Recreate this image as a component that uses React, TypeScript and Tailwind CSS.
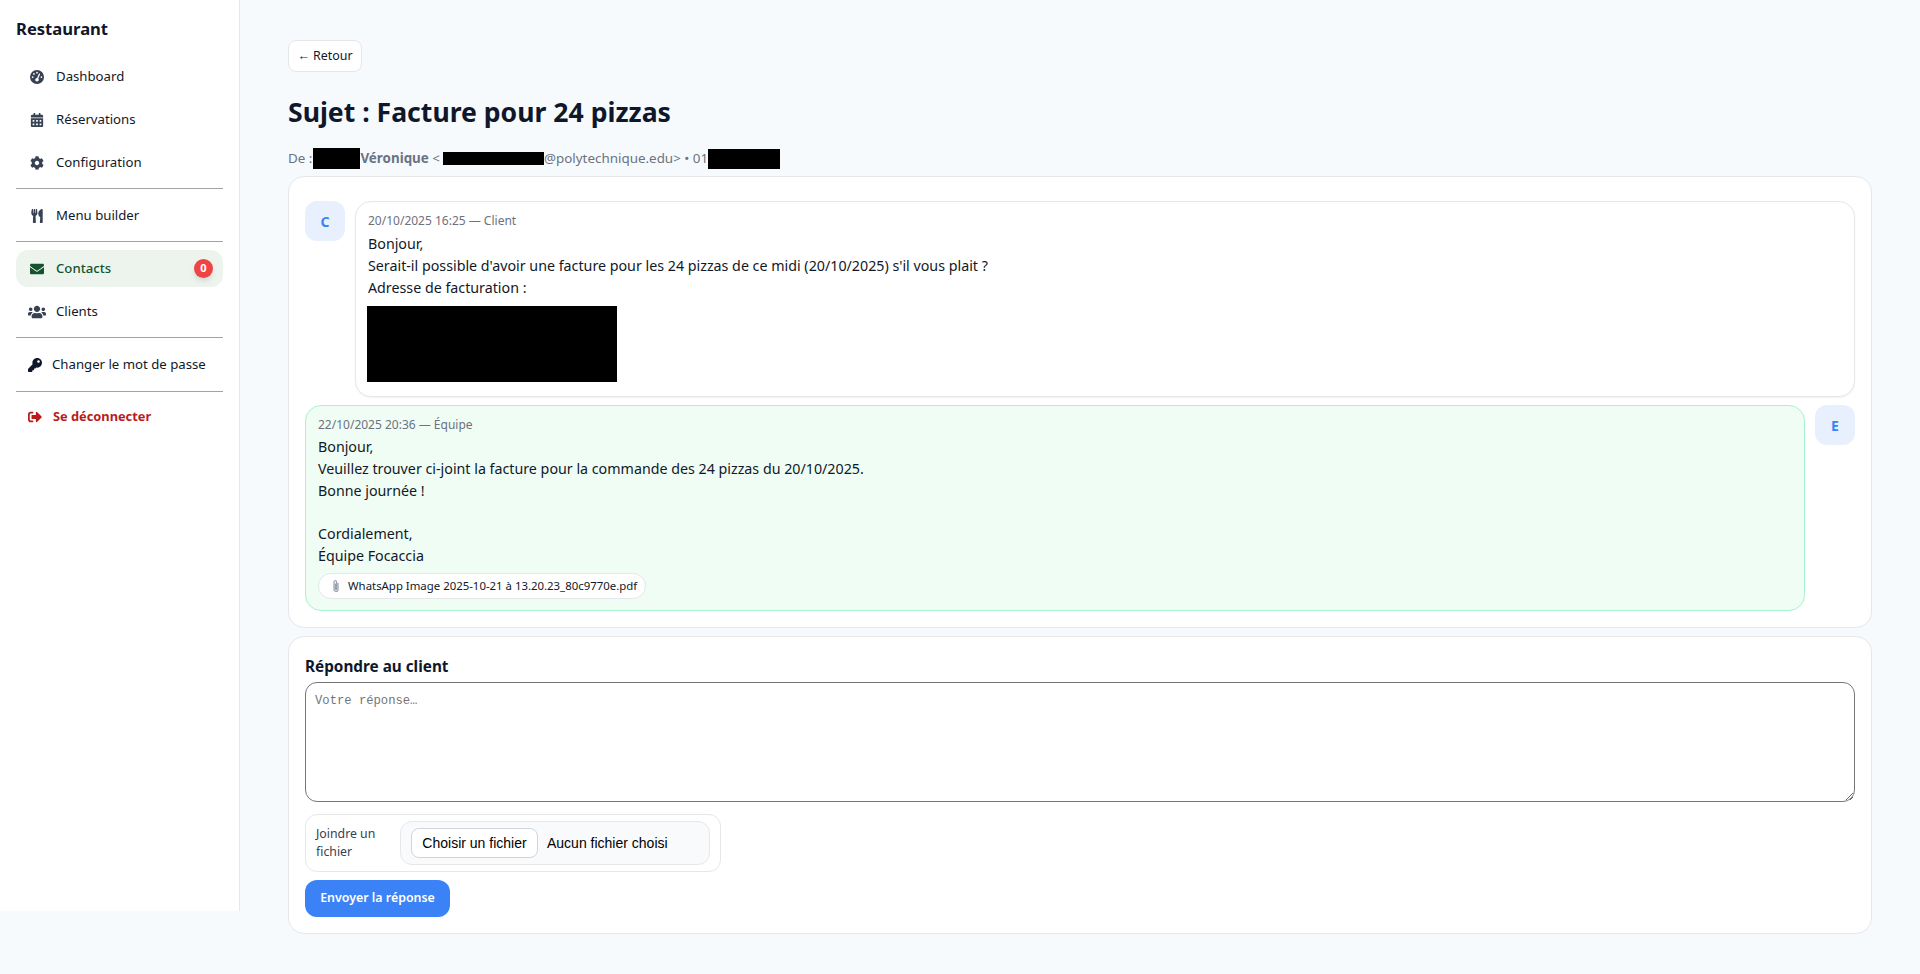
import React from "react";
import { FaCalendarAlt, FaCog, FaUtensils, FaEnvelope, FaUsers, FaKey, FaSignOutAlt } from "react-icons/fa";
import { FaGaugeHigh } from "react-icons/fa6";

const NavItem = ({ icon, label }: { icon: React.ReactNode; label: string }) => (
    <a className="flex h-[37px] items-center rounded-xl pl-[14px] text-[13.2px] text-[#111827]">
        <span className="flex w-[26px] shrink-0 text-[14px] text-[#374151]">{icon}</span>
        {label}
    </a>
);

const Divider = () => <div className="mt-px mb-[2px] h-px bg-[#a3a3a3]" />;

const Redacted = ({ className }: { className: string }) => <span className={`inline-block bg-black align-middle ${className}`} />;

const Avatar = ({ letter }: { letter: string }) => (
    <div className="flex size-10 shrink-0 items-center justify-center rounded-xl bg-[#e8f0fe] text-[14px] font-bold text-[#3b82f6]">
        {letter}
    </div>
);

export default function App() {
    return (
        <div className="flex h-[974px] items-start overflow-hidden bg-[#f6fafd] font-['Noto_Sans',sans-serif] text-[#111827]">
            {/* Sidebar */}
            <aside className="h-[911px] w-[240px] shrink-0 border-r border-[#e5e7eb] bg-white px-4 pt-[16px]">
                <h1 className="mb-[16px] text-[16.6px] leading-[26px] font-bold text-[#0f172a]">Restaurant</h1>
                <nav className="flex flex-col gap-[6px]">
                    <NavItem icon={<FaGaugeHigh />} label="Dashboard" />
                    <NavItem icon={<FaCalendarAlt />} label="Réservations" />
                    <NavItem icon={<FaCog />} label="Configuration" />
                    <Divider />
                    <NavItem icon={<FaUtensils />} label="Menu builder" />
                    <Divider />
                    <a className="flex h-[37px] items-center rounded-xl bg-[#edf4ee] pr-[10px] pl-[14px] text-[13.2px] font-medium text-[#14532d]">
                        <span className="flex w-[26px] shrink-0 text-[14px]">
                            <FaEnvelope />
                        </span>
                        Contacts
                        <span className="ml-auto flex size-[19px] items-center justify-center rounded-full bg-[#ef4444] text-[11px] font-bold text-white shadow-md">
                            0
                        </span>
                    </a>
                    <a className="flex h-[37px] items-center pl-[12px] text-[13.2px] text-[#111827]">
                        <span className="flex w-[28px] shrink-0 text-[18px] text-[#374151]">
                            <FaUsers />
                        </span>
                        Clients
                    </a>
                    <Divider />
                    <a className="flex h-[37px] items-center pl-[12px] text-[13.2px] text-[#111827]">
                        <span className="flex w-[24px] shrink-0 text-[14px] text-[#0f172a]">
                            <FaKey />
                        </span>
                        Changer le mot de passe
                    </a>
                    <div className="mt-[2px] h-px bg-[#a3a3a3]" />
                    <a className="flex h-[37px] items-center pl-[12px] text-[12.8px] font-bold text-[#b91c1c]">
                        <span className="flex w-[25px] shrink-0 text-[14px]">
                            <FaSignOutAlt />
                        </span>
                        Se déconnecter
                    </a>
                </nav>
            </aside>

            {/* Main */}
            <main className="min-w-0 flex-1 px-12 pt-10">
                <button className="h-8 w-[74px] rounded-lg border border-[#e5e7eb] bg-white text-[12.4px]">← Retour</button>

                <h2 className="mt-[22px] text-[26.6px] leading-[36px] font-bold text-[#0f172a]">Sujet : Facture pour 24 pizzas</h2>

                <div className="mt-[18px] flex h-[21px] items-center text-[13.4px] text-[#6b7280]">
                    De :
                    <Redacted className="ml-[1px] h-[21px] w-[47px]" />
                    <strong className="font-bold">Véronique</strong>
                    &nbsp;&lt;
                    <Redacted className="ml-[3px] h-[13px] w-[101px]" />
                    @polytechnique.edu&gt;&nbsp;•&nbsp;01
                    <Redacted className="h-[20px] w-[72px]" />
                </div>

                {/* Thread */}
                <section className="mt-[7px] flex flex-col gap-2 rounded-2xl border border-[#e5e7eb] bg-white px-4 pt-6 pb-4">
                    <div className="flex gap-[10px]">
                        <Avatar letter="C" />
                        <div className="h-[196px] flex-1 rounded-2xl border border-[#e5e7eb] bg-white px-3 pt-[9px] text-[14.25px] leading-[21.75px] shadow-[0_1px_2px_rgba(0,0,0,0.06)]">
                            <div className="mb-[2px] text-[12px] leading-[20px] text-[#6b7280]">20/10/2025 16:25 — Client</div>
                            <p>Bonjour,</p>
                            <p>Serait-il possible d'avoir une facture pour les 24 pizzas de ce midi (20/10/2025) s'il vous plait ?</p>
                            <p>Adresse de facturation :</p>
                            <div className="mt-[8px] -ml-px h-[76px] w-[250px] bg-black" />
                        </div>
                    </div>

                    <div className="flex gap-[10px]">
                        <div className="h-[206px] flex-1 rounded-2xl border border-[#a7f3d0] bg-[#f0fdf5] px-3 pt-[9px] text-[14.25px] leading-[21.75px]">
                            <div className="mb-px text-[12px] leading-[20px] text-[#6b7280]">22/10/2025 20:36 — Équipe</div>
                            <p>Bonjour,</p>
                            <p>Veuillez trouver ci-joint la facture pour la commande des 24 pizzas du 20/10/2025.</p>
                            <p>Bonne journée !</p>
                            <p>&nbsp;</p>
                            <p>Cordialement,</p>
                            <p>Équipe Focaccia</p>
                            <a className="mt-[6px] inline-flex h-[26px] items-center gap-[7px] rounded-full border border-[#e5e7eb] bg-white pr-2 pl-3 text-[11.4px] leading-none text-[#111827]">
                                <svg width="10" height="14" viewBox="0 0 10 14" fill="none" stroke="#9ca3af" strokeWidth="1.2">
                                    <path d="M7 4v6.5a2 2 0 0 1-4 0V3a1.3 1.3 0 0 1 2.6 0v7a.6.6 0 0 1-1.2 0V4.5" />
                                </svg>
                                WhatsApp Image 2025-10-21 à 13.20.23_80c9770e.pdf
                            </a>
                        </div>
                        <Avatar letter="E" />
                    </div>
                </section>

                {/* Reply */}
                <section className="mt-2 h-[298px] rounded-2xl border border-[#e5e7eb] bg-white px-4 pt-[17px]">
                    <h3 className="text-[15.3px] leading-[24px] font-bold text-[#0f172a]">Répondre au client</h3>
                    <textarea
                        placeholder="Votre réponse…"
                        className="mt-[4px] block h-[120px] w-full rounded-xl border border-[#767676] bg-white px-[9px] py-[9px] font-['Liberation_Mono',monospace] text-[12.2px] placeholder:text-[#757575]"
                    />
                    <div className="mt-3 flex h-[58px] w-[416px] items-center rounded-xl border border-[#e5e7eb] px-[10px]">
                        <span className="w-[84px] text-[12.3px] leading-[18px] text-[#374151]">Joindre un fichier</span>
                        <div className="flex h-[44px] w-[310px] items-center rounded-xl border border-[#e5e7eb] bg-[#f9fafb] pl-[10px] font-['Liberation_Sans',sans-serif] text-[14px] text-black">
                            <span className="flex h-[30px] w-[127px] items-center justify-center rounded-lg border border-[#d1d5db] bg-white">
                                Choisir un fichier
                            </span>
                            <span className="ml-[9px]">Aucun fichier choisi</span>
                        </div>
                    </div>
                    <button className="mt-2 h-[37px] w-[145px] rounded-xl bg-[#3b82f6] text-[12.4px] font-semibold text-white">Envoyer la réponse</button>
                </section>
            </main>
        </div>
    );
}
